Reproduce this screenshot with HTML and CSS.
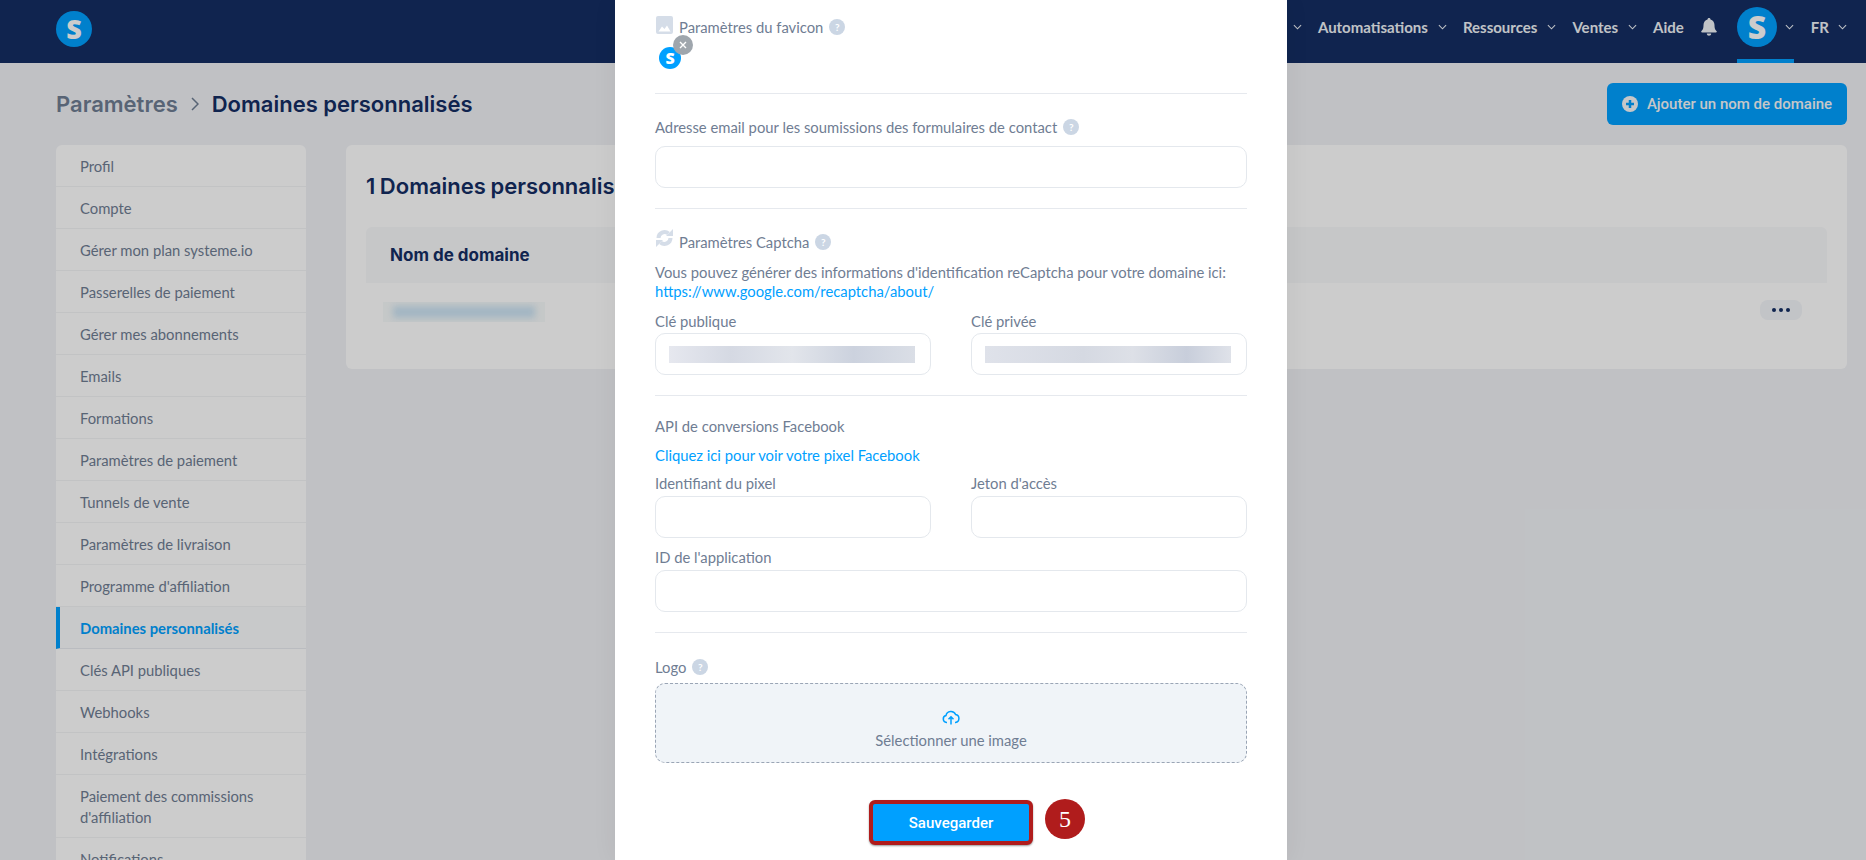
FILE: index.html
```html
<!DOCTYPE html>
<html lang="fr">

<head>
    <meta charset="UTF-8">
    <title>Domaines personnalisés</title>
    <link rel="stylesheet" href="styles.css">
</head>

<body>
    <header class="topbar">
        <div class="brand-logo">S</div>
        <nav class="topnav">
            <svg class="chev" viewBox="0 0 10 6"><path d="M1 1l4 4 4-4"/></svg>
            <span class="nav-item">Automatisations</span>
            <svg class="chev" viewBox="0 0 10 6"><path d="M1 1l4 4 4-4"/></svg>
            <span class="nav-item">Ressources</span>
            <svg class="chev" viewBox="0 0 10 6"><path d="M1 1l4 4 4-4"/></svg>
            <span class="nav-item">Ventes</span>
            <svg class="chev" viewBox="0 0 10 6"><path d="M1 1l4 4 4-4"/></svg>
            <span class="nav-item">Aide</span>
            <svg class="bell" viewBox="0 0 16 18"><path d="M8 0C7 0 6.500.7 6.500 1.500 4 2.300 2.500 4.500 2.500 7c0 4-1 5-2.200 6.300-.3.500 0 1.200.7 1.200h14c.7 0 1-.7.7-1.200C14.500 12 13.500 11 13.500 7c0-2.500-1.500-4.700-4-5.500C9.500.7 9 0 8 0zM5.800 15.500c0 1.300 1 2.300 2.200 2.300s2.200-1 2.200-2.300z"/></svg>
            <div class="avatar-wrap">
                <div class="avatar">S</div>
                <svg class="chev avatar-chev" viewBox="0 0 10 6"><path d="M1 1l4 4 4-4"/></svg>
            </div>
            <span class="nav-item lang">FR</span>
            <svg class="chev last-chev" viewBox="0 0 10 6"><path d="M1 1l4 4 4-4"/></svg>
        </nav>
    </header>

    <main class="page">
        <div class="page-head">
            <h1 class="crumbs">
                <span class="crumb-parent">Paramètres</span>
                <svg class="crumb-sep" viewBox="0 0 8 14"><path d="M1 1l6 6-6 6"/></svg>
                <span>Domaines personnalisés</span>
            </h1>
            <button class="add-btn">
                <svg class="plus" viewBox="0 0 16 16"><circle cx="8" cy="8" r="8"/><path d="M8 4v8M4 8h8"/></svg>
                Ajouter un nom de domaine
            </button>
        </div>

        <div class="columns">
            <ul class="side">
                <li>Profil</li>
                <li>Compte</li>
                <li>Gérer mon plan systeme.io</li>
                <li>Passerelles de paiement</li>
                <li>Gérer mes abonnements</li>
                <li>Emails</li>
                <li>Formations</li>
                <li>Paramètres de paiement</li>
                <li>Tunnels de vente</li>
                <li>Paramètres de livraison</li>
                <li>Programme d'affiliation</li>
                <li class="active">Domaines personnalisés</li>
                <li>Clés API publiques</li>
                <li>Webhooks</li>
                <li>Intégrations</li>
                <li>Paiement des commissions d'affiliation</li>
                <li>Notifications</li>
            </ul>

            <section class="card">
                <h2 class="card-title">1 Domaines personnalisés</h2>
                <div class="table-head">Nom de domaine</div>
                <div class="table-row">
                    <div class="blur-name"><div class="blur-name-inner"></div></div>
                    <div class="dots"><i></i><i></i><i></i></div>
                </div>
            </section>
        </div>
    </main>

    <div class="overlay"></div>

    <div class="modal">
        <div class="group favicon-group">
            <div class="label-row favicon-label">
                <svg class="label-icon" viewBox="0 0 17 18"><path fill-rule="evenodd" d="M2 0h13a2 2 0 0 1 2 2v14a2 2 0 0 1-2 2H2a2 2 0 0 1-2-2V2a2 2 0 0 1 2-2zM2.500 15.500L6 10.500l2.500 2.500 2.500-3.500 3.500 6z"/></svg>
                <span>Paramètres du favicon</span>
                <span class="help">?</span>
            </div>
            <div class="favicon-thumb">
                <div class="favicon-logo">S</div>
                <div class="favicon-close">
                    <svg viewBox="0 0 8 8"><path d="M1 1l6 6M7 1L1 7"/></svg>
                </div>
            </div>
        </div>

        <div class="group">
            <div class="label-row plain"><span>Adresse email pour les soumissions des formulaires de contact</span><span class="help">?</span></div>
            <div class="input"></div>
        </div>

        <div class="group">
            <div class="label-row">
                <svg class="label-icon" viewBox="0 0 17 18"><path class="refresh-arc" d="M2.500 9a6 6 0 0 1 10-4.400M14.500 9a6 6 0 0 1-10 4.400"/><path d="M17 0v7h-7zM0 18v-7h7z"/></svg>
                <span>Paramètres Captcha</span>
                <span class="help">?</span>
            </div>
            <p class="hint">Vous pouvez générer des informations d'identification reCaptcha pour votre domaine ici: <a href="#">https://www.google.com/recaptcha/about/</a></p>
            <div class="field-grid">
                <div>
                    <div class="field-label">Clé publique</div>
                    <div class="input"><div class="blur-key"></div></div>
                </div>
                <div>
                    <div class="field-label">Clé privée</div>
                    <div class="input"><div class="blur-key other"></div></div>
                </div>
            </div>
        </div>

        <div class="group fb-group">
            <div class="field-label">API de conversions Facebook</div>
            <a class="fb-link" href="#">Cliquez ici pour voir votre pixel Facebook</a>
            <div class="field-grid fb-grid">
                <div>
                    <div class="field-label">Identifiant du pixel</div>
                    <div class="input"></div>
                </div>
                <div>
                    <div class="field-label">Jeton d'accès</div>
                    <div class="input"></div>
                </div>
            </div>
            <div class="field-label app-label">ID de l'application</div>
            <div class="input"></div>
        </div>

        <div class="group last">
            <div class="label-row plain logo-label"><span>Logo</span><span class="help">?</span></div>
            <div class="dropzone">
                <svg class="upload" viewBox="0 0 18 16"><path d="M5 13.500H4.500A3.500 3.500 0 0 1 4 6.600 5 5 0 0 1 13.600 5.600 4 4 0 0 1 13.500 13.500H13M9 15.500V8M6.500 10.300L9 7.800l2.500 2.500"/></svg>
                <span>Sélectionner une image</span>
            </div>
        </div>

        <div class="save-row">
            <button class="save-btn">Sauvegarder</button>
            <div class="step-badge">5</div>
        </div>
    </div>
</body>

</html>
```

FILE: styles.css
```css
* {
    box-sizing: border-box;
}

html, body {
    height: 860px;
    overflow: hidden;
}

body {
    margin: 0;
    font-family: "Lato", sans-serif;
    background-color: #f0f2f6;
    color: #142d63;
}

.topbar {
    height: 63px;
    background-color: #142d63;
    display: flex;
    align-items: flex-start;
    justify-content: space-between;
    padding: 0 19px 0 56px;
}

.brand-logo {
    width: 36px;
    height: 36px;
    margin-top: 11px;
    border-radius: 50%;
    background-color: #00a0ff;
    color: #fff;
    font-family: "Open Sans", sans-serif;
    font-weight: 800;
    font-size: 27px;
    line-height: 36px;
    text-align: center;
}

.topnav {
    display: flex;
    align-items: center;
    height: 54px;
    color: #f0f4f8;
    font-size: 15px;
    font-weight: 700;
}

.chev {
    width: 9px;
    height: 6px;
    margin: 0 16px 0 10px;
    fill: none;
    stroke: #f0f4f8;
    stroke-width: 1.200;
}

.bell {
    width: 16px;
    height: 18px;
    margin: 0 20px 0 17px;
    fill: #f0f4f8;
}

.avatar-wrap {
    align-self: flex-start;
    height: 63px;
    width: 57px;
    display: flex;
    justify-content: space-between;
    padding-top: 7px;
    border-bottom: 4px solid #00a0ff;
}

.avatar {
    width: 40px;
    height: 40px;
    border-radius: 50%;
    background-color: #00a0ff;
    color: #fff;
    font-family: "Open Sans", sans-serif;
    font-weight: 800;
    font-size: 32px;
    line-height: 40px;
    text-align: center;
}

.avatar-chev {
    margin: 17px 0 0 0;
}

.lang {
    margin-left: 17px;
}

.last-chev {
    margin: 0 0 0 9px;
}

.page {
    padding: 20px 19px 0 56px;
}

.page-head {
    display: flex;
    align-items: center;
    justify-content: space-between;
    height: 42px;
    margin-bottom: 20px;
}

.crumbs {
    margin: 0;
    display: flex;
    align-items: center;
    gap: 13px;
    font-family: "Inter", sans-serif;
    font-size: 22px;
    font-weight: 600;
}

.crumb-parent {
    color: #6f7d93;
}

.crumb-sep {
    width: 8px;
    height: 14px;
    fill: none;
    stroke: #6f7d93;
    stroke-width: 1.500;
}

.add-btn {
    height: 42px;
    width: 240px;
    border: none;
    border-radius: 6px;
    background-color: #00a0ff;
    color: #f8f9fb;
    font-family: "Roboto", sans-serif;
    font-size: 15px;
    font-weight: 500;
    display: flex;
    align-items: center;
    justify-content: center;
    gap: 9px;
}

.plus {
    width: 16px;
    height: 16px;
}

.plus circle {
    fill: #f8f9fb;
}

.plus path {
    stroke: #00a0ff;
    stroke-width: 2.500;
}

.columns {
    display: flex;
    gap: 40px;
    align-items: flex-start;
}

.side {
    list-style: none;
    margin: 0;
    padding: 0;
    width: 250px;
    flex-shrink: 0;
    background: #fff;
    border-radius: 6px 6px 0 0;
    font-size: 14.800px;
    color: #6f7d93;
}

.side li {
    padding: 11px 24px 9px 24px;
    line-height: 21px;
    border-bottom: 1px solid #f3f4f6;
}

.side li.active {
    color: #00a0ff;
    font-weight: 700;
    background-color: #fbfcfd;
    border-left: 4px solid #00a0ff;
    border-bottom-color: #e9ecf0;
    padding-left: 20px;
}

.card {
    flex: 1;
    height: 224px;
    background: #fff;
    border-radius: 6px;
    padding: 26px 20px 0 20px;
}

.card-title {
    margin: 0 0 26px 0;
    font-family: "Inter", sans-serif;
    font-size: 22px;
    font-weight: 600;
    line-height: 30px;
    word-spacing: -1px;
}

.table-head {
    height: 56px;
    background-color: #f8f9fb;
    border-radius: 6px 6px 0 0;
    padding: 0 24px;
    font-family: "Inter", sans-serif;
    font-size: 17px;
    font-weight: 700;
    line-height: 56px;
}

.table-row {
    display: flex;
    justify-content: space-between;
    align-items: flex-start;
    padding: 17px 25px 0 17px;
}

.blur-name {
    width: 162px;
    height: 20px;
    margin-top: 2px;
    overflow: hidden;
    padding: 4px 10px;
    background-color: #f7fafa;
}

.blur-name-inner {
    height: 12px;
    background-color: #cce4f4;
    filter: blur(3px);
}

.dots {
    width: 42px;
    height: 20px;
    background-color: #f3f5f9;
    border-radius: 8px;
    display: flex;
    align-items: center;
    justify-content: center;
    gap: 3px;
}

.dots i {
    width: 4px;
    height: 4px;
    border-radius: 50%;
    background-color: #142d63;
}

.overlay {
    position: absolute;
    inset: 0;
    background-color: rgba(0, 0, 0, 0.2);
}

.modal {
    position: absolute;
    top: 0;
    left: 615px;
    width: 672px;
    height: 860px;
    overflow: hidden;
    background: #fff;
    box-shadow: 0 0 24px rgba(0, 0, 0, 0.06);
    padding: 18px 40px 0 40px;
    color: #6f7d93;
    font-size: 14.800px;
}

.group {
    border-bottom: 1px solid #e6e9ee;
    padding-bottom: 20px;
    margin-bottom: 22px;
}

.group.last {
    border-bottom: none;
    padding-bottom: 0;
    margin-bottom: 0;
}

.favicon-group {
    height: 76px;
}

.favicon-label span {
    margin-top: -3px;
}

.fb-group {
    margin-top: -2px;
    margin-bottom: 23px;
}

.label-row {
    display: flex;
    align-items: center;
    gap: 6px;
    height: 21px;
}

.label-row.plain {
    margin-bottom: 9px;
}

.label-row.logo-label {
    margin-bottom: 6px;
}

.label-icon {
    width: 17px;
    height: 18px;
    margin-top: -8px;
    margin-left: 1px;
    fill: #d5dde8;
}

.refresh-arc {
    fill: none;
    stroke: #d5dde8;
    stroke-width: 4;
}

.help {
    width: 16px;
    height: 16px;
    border-radius: 50%;
    background-color: #cbd6e4;
    color: #fff;
    font-size: 10px;
    font-weight: 700;
    line-height: 16px;
    text-align: center;
}

.favicon-thumb {
    position: relative;
    width: 38px;
    height: 34px;
    margin-top: -4px;
}

.favicon-logo {
    position: absolute;
    left: 4px;
    top: 12px;
    width: 22px;
    height: 22px;
    border-radius: 50%;
    background-color: #00a0ff;
    color: #fff;
    font-family: "Open Sans", sans-serif;
    font-weight: 800;
    font-size: 16px;
    line-height: 22px;
    text-align: center;
}

.favicon-close {
    position: absolute;
    left: 18px;
    top: 0;
    width: 20px;
    height: 20px;
    border-radius: 50%;
    background-color: #9fa6ad;
    display: flex;
    align-items: center;
    justify-content: center;
}

.favicon-close svg {
    width: 8px;
    height: 8px;
    fill: none;
    stroke: #fff;
    stroke-width: 1.400;
}

.input {
    height: 42px;
    border: 1px solid #e4e8ed;
    border-radius: 10px;
    background: #fff;
    padding: 12px 15px 12px 13px;
}

.hint {
    margin: 11px 0 10px 0;
    line-height: 19px;
}

.hint a, .fb-link {
    color: #00a0ff;
    text-decoration: none;
}

.hint a {
    display: block;
}

.fb-link {
    display: block;
    line-height: 21px;
    margin: 8px 0 7px 0;
}

.field-grid {
    display: grid;
    grid-template-columns: 276px 276px;
    gap: 40px;
}

.field-label {
    line-height: 21px;
    margin-bottom: 1px;
}

.fb-grid .field-label {
    margin-bottom: 2px;
}

.app-label {
    margin-top: 9px;
    margin-bottom: 2px;
}

.blur-key {
    height: 17px;
    background: linear-gradient(90deg, #e6e8ef, #d5d9e3 25%, #e2e5eb 50%, #ccd2de 75%, #dadee6);
}

.blur-key.other {
    background: linear-gradient(90deg, #dfe2ea, #d5d9e2 40%, #dde0e7 60%, #c8cedb 82%, #dfe2e9);
}

.dropzone {
    height: 80px;
    border: 1px dashed #9aa5b5;
    border-radius: 10px;
    background-color: #f0f4f8;
    display: flex;
    flex-direction: column;
    align-items: center;
    gap: 5px;
    padding-top: 25px;
    line-height: 21px;
}

.upload {
    width: 18px;
    height: 16px;
    flex-shrink: 0;
    fill: none;
    stroke: #00a0ff;
    stroke-width: 1.500;
}

.save-row {
    display: flex;
    justify-content: center;
    position: relative;
    margin-top: 37px;
}

.save-btn {
    width: 164px;
    height: 45px;
    border: 4px solid #b01c1c;
    border-radius: 6px;
    background-color: #00a0ff;
    color: #fff;
    font-family: "Roboto", sans-serif;
    font-size: 15px;
    font-weight: 500;
    box-shadow: 0 1px 2px rgba(0, 0, 0, 0.4);
}

.step-badge {
    position: absolute;
    left: 390px;
    top: -1px;
    width: 40px;
    height: 40px;
    border-radius: 50%;
    background-color: #b01c1c;
    color: #fff;
    font-family: "Liberation Serif", serif;
    font-size: 24px;
    line-height: 40px;
    text-align: center;
}
```
